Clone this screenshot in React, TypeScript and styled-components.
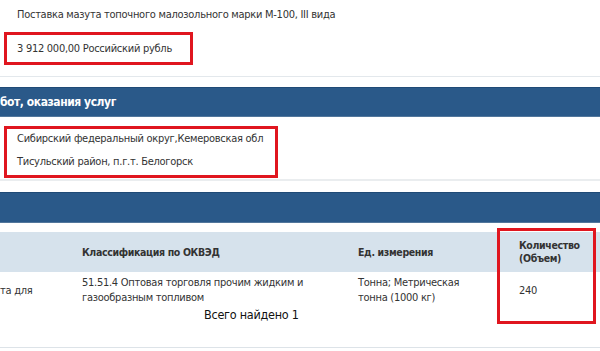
import React from "react";
import styled, { createGlobalStyle } from "styled-components";

const Global = createGlobalStyle`
  html, body { margin: 0; padding: 0; background: #fff; }
  body {
    font-family: "DejaVu Sans Condensed", "DejaVu Sans", sans-serif;
    font-size: 11px;
    letter-spacing: -0.27px;
    color: #333;
    width: 600px;
    height: 351px;
    overflow: hidden;
  }
`;

const Page = styled.div`
  position: relative;
  width: 600px;
  height: 351px;
  overflow: hidden;
`;

const Section = styled.div<{ $pt: number; $pb: number }>`
  padding: ${(p) => p.$pt}px 0 ${(p) => p.$pb}px 0;
  display: flex;
  flex-direction: column;
`;

const Line = styled.div`
  line-height: 20px;
  padding-left: 17px;
`;

const Marked = styled.div<{ $w: number; $mt: number; $pt: number; $pb: number }>`
  box-sizing: border-box;
  width: ${(p) => p.$w}px;
  margin: ${(p) => p.$mt}px 0 0 4px;
  border: 3px solid #e0161f;
  padding: ${(p) => p.$pt}px 0 ${(p) => p.$pb}px 10px;
  display: flex;
  flex-direction: column;
  gap: 3px;
`;

const MarkedText = styled.div`
  line-height: 20px;
  white-space: nowrap;
`;

const Rule = styled.div<{ $h: number; $c: string; $mb: number }>`
  height: ${(p) => p.$h}px;
  background: ${(p) => p.$c};
  margin-bottom: ${(p) => p.$mb}px;
`;

const Bar = styled.div<{ $h: number; $mb: number }>`
  box-sizing: border-box;
  height: ${(p) => p.$h}px;
  margin-bottom: ${(p) => p.$mb}px;
  background: #2a5989;
  border-top: 1px solid #1f4a76;
  border-bottom: 1px solid #52779c;
  color: #fff;
  font-weight: bold;
  font-size: 12px;
  letter-spacing: -0.45px;
  display: flex;
  align-items: center;
`;

const Grid = styled.div`
  display: grid;
  grid-template-columns: 76px 276px 161px 87px;
`;

const HeadCell = styled.div`
  background: #d6e2ec;
  height: 40px;
  display: flex;
  align-items: center;
  padding-left: 6px;
  font-weight: bold;
  font-size: 10.5px;
  letter-spacing: -0.35px;
  line-height: 13px;
  color: #333;
`;

const Cell = styled.div<{ $pl: number; $pr: number }>`
  height: 36px;
  display: flex;
  align-items: center;
  padding-left: ${(p) => p.$pl}px;
  padding-right: ${(p) => p.$pr}px;
  line-height: 15px;
`;

const Total = styled.div`
  padding-left: 204px;
  font-size: 12.5px;
  letter-spacing: -0.25px;
  line-height: 14px;
  color: #111;
  height: 14px;
  margin-bottom: 25px;
`;

const Callout = styled.div`
  position: absolute;
  left: 497px;
  top: 228px;
  width: 99px;
  height: 96px;
  box-sizing: border-box;
  border: 3px solid #e0161f;
  pointer-events: none;
`;

export default function App() {
  return (
    <>
      <Global />
      <Page>
        <Section $pt={5} $pb={11}>
          <Line>Поставка мазута топочного малозольного марки М-100, III вида</Line>
          <Marked $w={189} $mt={7} $pt={4} $pb={3}>
            <MarkedText>3 912 000,00 Российский рубль</MarkedText>
          </Marked>
        </Section>
        <Rule $h={1} $c="#e3e8ec" $mb={10} />
        <Bar $h={30} $mb={9}>бот, оказания услуг</Bar>
        <Marked $w={274} $mt={0} $pt={0} $pb={3}>
          <MarkedText>Сибирский федеральный округ,Кемеровская обл</MarkedText>
          <MarkedText>Тисульский район, п.г.т. Белогорск</MarkedText>
        </Marked>
        <Rule $h={1} $c="#fff" $mb={0} />
        <Rule $h={2} $c="#eaedef" $mb={11} />
        <Bar $h={31} $mb={9} />
        <Grid>
          <HeadCell />
          <HeadCell>Классификация по ОКВЭД</HeadCell>
          <HeadCell>Ед. измерения</HeadCell>
          <HeadCell>
            Количество
            <br />
            (Объем)
          </HeadCell>
          <Cell $pl={0} $pr={0}>та для</Cell>
          <Cell $pl={6} $pr={34}>
            51.51.4 Оптовая торговля прочим жидким и газообразным топливом
          </Cell>
          <Cell $pl={6} $pr={28}>Тонна; Метрическая тонна (1000 кг)</Cell>
          <Cell $pl={6} $pr={0}>240</Cell>
        </Grid>
        <Total>Всего найдено 1</Total>
        <Rule $h={1} $c="#dde3e8" $mb={0} />
        <Callout />
      </Page>
    </>
  );
}
